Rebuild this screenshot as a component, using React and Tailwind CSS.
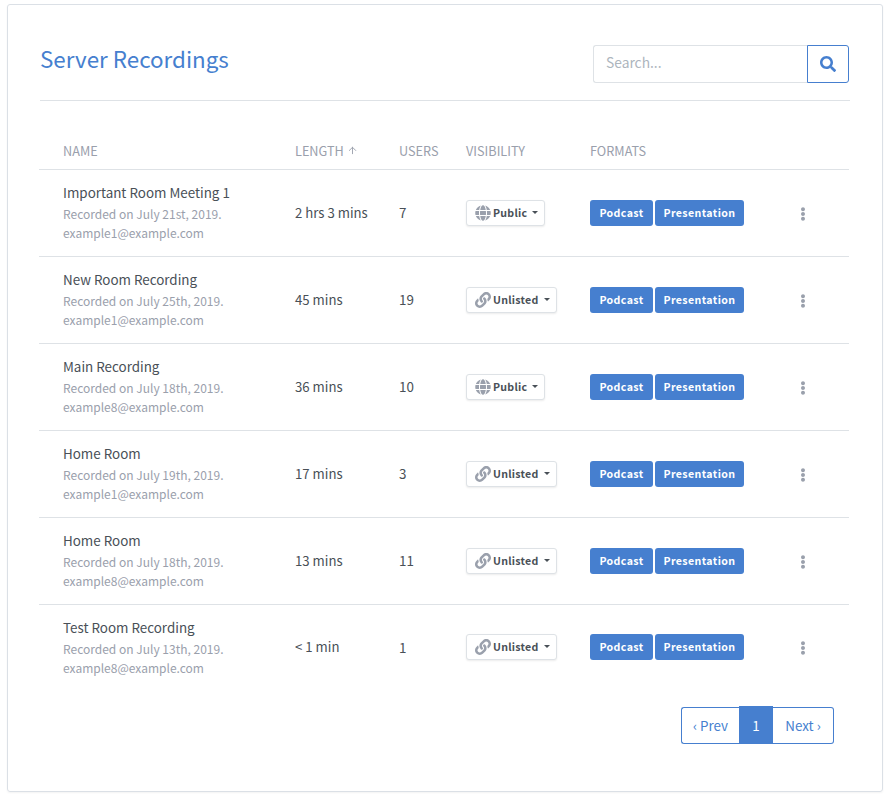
import React from 'react'
import { ArrowUp } from 'lucide-react'
import { FaGlobe, FaLink, FaSearch, FaEllipsisV } from 'react-icons/fa'

const recordings = [
  { name: 'Important Room Meeting 1', date: 'July 21st, 2019', owner: 'example1@example.com', length: '2 hrs 3 mins', users: 7, visibility: 'Public' },
  { name: 'New Room Recording', date: 'July 25th, 2019', owner: 'example1@example.com', length: '45 mins', users: 19, visibility: 'Unlisted' },
  { name: 'Main Recording', date: 'July 18th, 2019', owner: 'example8@example.com', length: '36 mins', users: 10, visibility: 'Public' },
  { name: 'Home Room', date: 'July 19th, 2019', owner: 'example1@example.com', length: '17 mins', users: 3, visibility: 'Unlisted' },
  { name: 'Home Room', date: 'July 18th, 2019', owner: 'example8@example.com', length: '13 mins', users: 11, visibility: 'Unlisted' },
  { name: 'Test Room Recording', date: 'July 13th, 2019', owner: 'example8@example.com', length: '< 1 min', users: 1, visibility: 'Unlisted' },
]

function Row({ rec }) {
  return (
    <tr className="group h-[87px] border-t border-[#dee2e6] last:h-[85px]">
      <td className="pl-6 align-middle group-last:pt-[2px]">
        <div className="text-[13.4px] leading-[21px] text-[#495057]">{rec.name}</div>
        <div className="mt-px text-[12px] leading-[20px] text-[#9aa0ac]">Recorded on {rec.date}.</div>
        <div className="-mt-px text-[12px] leading-[20px] text-[#9aa0ac]">{rec.owner}</div>
      </td>
      <td className="px-3 text-[13.2px] whitespace-nowrap text-[#495057]">{rec.length}</td>
      <td className="px-3 text-[13.4px] text-[#495057]">{rec.users}</td>
      <td className="px-3">
        <button className="flex h-[26px] items-center rounded-[3px] border border-[#dee2e6] bg-white pl-2 pr-[6px] text-[10.6px] font-bold tracking-[0.25px] text-[#495057] shadow-[0_1px_2px_rgba(0,0,0,0.08)]">
          {rec.visibility === 'Public'
            ? <FaGlobe className="mr-[2px] text-[16px] text-[#9aa0ac]" />
            : <FaLink className="mr-[2px] text-[16px] text-[#9aa0ac]" />}
          <span className="pt-px">{rec.visibility}</span>
          <span className="ml-[5px] h-0 w-0 border-x-[3px] border-t-[3px] border-x-transparent border-t-[#495057]"></span>
        </button>
      </td>
      <td className="px-3">
        <div className="flex gap-[2px]">
          <span className="flex h-[26px] w-[63px] items-center justify-center rounded-[3px] bg-[#467fcf] pt-px text-[10.6px] font-bold tracking-[0.4px] text-white">Podcast</span>
          <span className="flex h-[26px] w-[89px] items-center justify-center rounded-[3px] bg-[#467fcf] pt-px text-[10.6px] font-bold tracking-[0.4px] text-white">Presentation</span>
        </div>
      </td>
      <td>
        <FaEllipsisV className="mt-[2px] ml-[32px] text-[14px] text-[#9aa0ac]" />
      </td>
    </tr>
  )
}

export default function App() {
  return (
    <div className="h-[802px] bg-white pt-1 pl-[7px] pr-[7px] font-['Noto_Sans_CJK_JP','Liberation_Sans',sans-serif]">
      <div className="h-[788px] rounded-[3px] border border-[#dbe0e6] pl-8 pr-8 pt-10 shadow-[0_1px_2px_rgba(0,0,0,0.05)]">
        <div className="flex h-[56px] items-start justify-between border-b border-[#dee2e6]">
          <h1 className="-mt-px text-[22.4px] leading-[28px] text-[#467fcf]">Server Recordings</h1>
          <div className="mr-px flex h-[38px] w-[256px]">
            <div className="flex flex-1 items-center rounded-l-[3px] border border-r-0 border-[#dee2e6] pb-[3px] pl-3 text-[13.8px] text-[#adb5bd]">Search...</div>
            <button className="flex w-[42px] items-center justify-center rounded-r-[3px] border border-[#467fcf] text-[#467fcf]">
              <FaSearch className="text-[16px]" />
            </button>
          </div>
        </div>
        <table className="mt-[32px] -ml-[1px] w-[810px] table-fixed border-collapse">
          <colgroup>
            <col className="w-[244px]" />
            <col className="w-[104px]" />
            <col className="w-[67px]" />
            <col className="w-[124px]" />
            <col className="w-[186px]" />
            <col />
          </colgroup>
          <thead>
            <tr className="h-[36px] text-left text-[12.7px] text-[#9aa0ac]">
              <th className="pl-6 font-normal">NAME</th>
              <th className="px-3 font-normal">
                <span className="flex items-center">LENGTH <ArrowUp size={11} className="ml-[3px]" /></span>
              </th>
              <th className="px-3 font-normal">USERS</th>
              <th className="px-3 font-normal">VISIBILITY</th>
              <th className="px-3 font-normal">FORMATS</th>
              <th></th>
            </tr>
          </thead>
          <tbody>
            {recordings.map((rec, i) => <Row key={i} rec={rec} />)}
          </tbody>
        </table>
        <div className="mt-[18px] flex justify-end pr-[16px]">
          <div className="flex h-[37px] items-stretch text-[13.4px] text-[#467fcf]">
            <a className="flex w-[58px] items-center justify-center rounded-l-[3px] border border-r-0 border-[#467fcf]">‹ Prev</a>
            <a className="-mt-px flex w-[34px] items-center justify-center bg-[#467fcf] text-white">1</a>
            <a className="flex w-[61px] items-center justify-center rounded-r-[3px] border border-l-0 border-[#467fcf]">Next ›</a>
          </div>
        </div>
      </div>
    </div>
  )
}
